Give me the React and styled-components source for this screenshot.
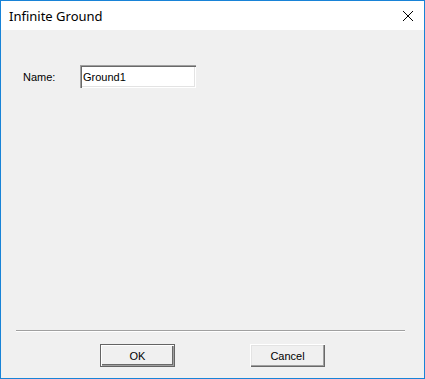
import styled, { createGlobalStyle } from "styled-components";

const GlobalStyle = createGlobalStyle`
    html, body {
        margin: 0;
        padding: 0;
        background: #ffffff;
    }
    * {
        box-sizing: border-box;
    }
`

const CloseIcon = () => (
    <svg width="12" height="12" viewBox="0 0 12 12">
        <path d="M1 1 L11 11 M11 1 L1 11" stroke="#000" strokeWidth="1" fill="none" />
    </svg>
)

const App = () => {
    return (
        <>
            <GlobalStyle />
            <Window>
                <TitleBar>
                    <Title>Infinite Ground</Title>
                    <CloseButton><CloseIcon /></CloseButton>
                </TitleBar>
                <Body>
                    <FieldRow>
                        <Label>Name:</Label>
                        <TextInput defaultValue="Ground1" />
                    </FieldRow>
                </Body>
                <Footer>
                    <Separator />
                    <ButtonRow>
                        <Button $default>OK</Button>
                        <Button>Cancel</Button>
                    </ButtonRow>
                </Footer>
            </Window>
        </>
    )
}

export default App;

const Window = styled.div`
    width: 425px;
    height: 379px;
    border: 1px solid #1883d7;
    display: flex;
    flex-direction: column;
    background: #f0f0f0;
    font-family: "Liberation Sans", Arial, sans-serif;
    font-size: 11px;
    color: #000;
`

const TitleBar = styled.div`
    height: 29px;
    background: #ffffff;
    display: flex;
    align-items: center;
    justify-content: space-between;
    padding-left: 8px;
`

const Title = styled.div`
    font-family: "Noto Sans", "Open Sans", sans-serif;
    font-size: 13px;
    color: #000;
`

const CloseButton = styled.div`
    width: 32px;
    height: 29px;
    display: flex;
    align-items: center;
    justify-content: center;
`

const Body = styled.div`
    flex: 1;
    padding: 35px 0 0 22px;
`

const FieldRow = styled.div`
    display: flex;
    align-items: center;
`

const Label = styled.div`
    width: 57px;
`

const TextInput = styled.input`
    width: 116px;
    height: 23px;
    margin: 0;
    padding: 1px 3px 0 3px;
    font-family: "Liberation Sans", Arial, sans-serif;
    font-size: 11px;
    color: #000;
    background: #ffffff;
    border: none;
    outline: none;
    box-shadow:
        inset 1px 1px 0 #a0a0a0,
        inset 2px 2px 0 #696969,
        inset -1px -1px 0 #ffffff,
        inset -2px -2px 0 #e3e3e3;
`

const Footer = styled.div`
    display: flex;
    flex-direction: column;
`

const Separator = styled.div`
    margin: 0 19px 0 15px;
    height: 2px;
    border-top: 1px solid #a0a0a0;
    border-bottom: 1px solid #ffffff;
`

const ButtonRow = styled.div`
    display: flex;
    justify-content: center;
    gap: 75px;
    padding: 12px 0 11px 0;
`

const Button = styled.button`
    width: 75px;
    height: 23px;
    margin: 0;
    padding: 0;
    font-family: "Liberation Sans", Arial, sans-serif;
    font-size: 11px;
    color: #000;
    background: #f0f0f0;
    border: none;
    box-shadow: ${(p) => p.$default
        ? `inset 0 0 0 1px #646464,
           inset 1px 1px 0 1px #ffffff,
           inset -1px -1px 0 1px #a0a0a0,
           inset -2px -2px 0 1px #696969`
        : `inset 1px 1px 0 #ffffff,
           inset -1px -1px 0 #696969,
           inset -2px -2px 0 #a0a0a0,
           inset 2px 2px 0 #e3e3e3`};
`
